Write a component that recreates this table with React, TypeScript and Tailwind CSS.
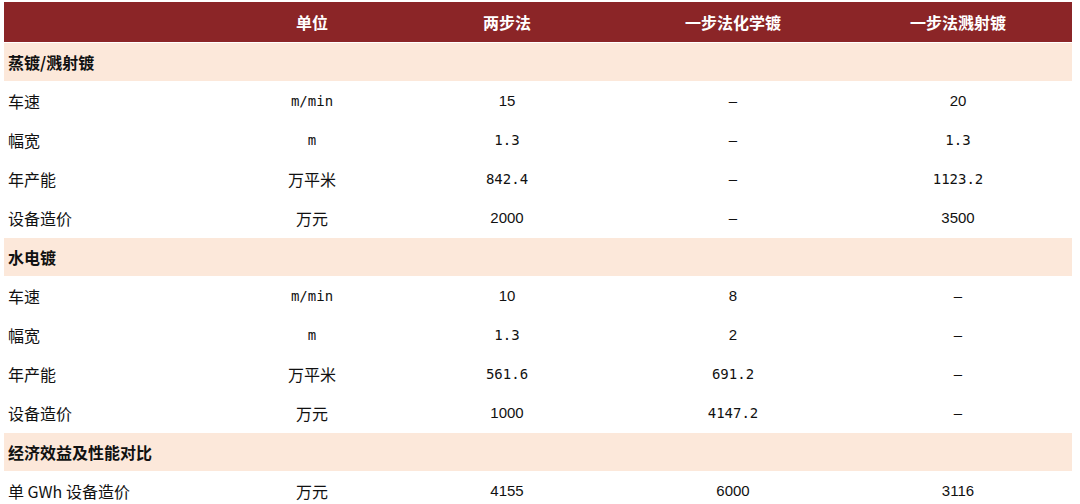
const cjk = "font-['SimHei','Noto_Sans_CJK_SC',sans-serif]";
const mono = "font-['DejaVu_Sans_Mono','Noto_Sans_CJK_SC',monospace] text-[14px] pt-[2px]";
const arial = "font-['Liberation_Sans','Noto_Sans_CJK_SC',sans-serif] text-[15px] pt-[2px]";

type Cell = { t: string; f?: "mono" | "arial" };

const dash: Cell = { t: "–", f: "arial" };

const rows: (string | Cell[])[] = [
  "蒸镀/溅射镀",
  [{ t: "车速" }, { t: "m/min", f: "mono" }, { t: "15", f: "arial" }, dash, { t: "20", f: "arial" }],
  [{ t: "幅宽" }, { t: "m", f: "mono" }, { t: "1.3", f: "mono" }, dash, { t: "1.3", f: "mono" }],
  [{ t: "年产能" }, { t: "万平米" }, { t: "842.4", f: "mono" }, dash, { t: "1123.2", f: "mono" }],
  [{ t: "设备造价" }, { t: "万元" }, { t: "2000", f: "arial" }, dash, { t: "3500", f: "arial" }],
  "水电镀",
  [{ t: "车速" }, { t: "m/min", f: "mono" }, { t: "10", f: "arial" }, { t: "8", f: "arial" }, dash],
  [{ t: "幅宽" }, { t: "m", f: "mono" }, { t: "1.3", f: "mono" }, { t: "2", f: "arial" }, dash],
  [{ t: "年产能" }, { t: "万平米" }, { t: "561.6", f: "mono" }, { t: "691.2", f: "mono" }, dash],
  [{ t: "设备造价" }, { t: "万元" }, { t: "1000", f: "arial" }, { t: "4147.2", f: "mono" }, dash],
  "经济效益及性能对比",
  [{ t: "单 GWh 设备造价" }, { t: "万元" }, { t: "4155", f: "arial" }, { t: "6000", f: "arial" }, { t: "3116", f: "arial" }],
];

const cols = "grid grid-cols-[210px_196px_194px_258px_192px]";

function fontOf(f?: string) {
  if (f === "mono") return mono;
  if (f === "arial") return arial;
  return `${cjk} text-[16px]`;
}

export default function App() {
  return (
    <div className="w-[1080px] h-[504px] overflow-hidden bg-white pt-[2px] pl-[4px] text-[#111111]">
      <div className="w-[1068px]">
        <div className={`${cols} h-[40px] items-center bg-[#8b2527] text-white font-bold ${cjk} text-[16px]`}>
          <div />
          <div className="text-center">单位</div>
          <div className="text-center">两步法</div>
          <div className="text-center">一步法化学镀</div>
          <div className="text-center">一步法溅射镀</div>
        </div>
        {rows.map((r, i) =>
          typeof r === "string" ? (
            <div key={i} className="h-[39px] pt-[1px]">
              <div className={`h-[38px] flex items-center bg-[#fce8da] pl-[4px] font-bold ${cjk} text-[16px]`}>{r}</div>
            </div>
          ) : (
            <div key={i} className={`${cols} h-[39px] items-center`}>
              {r.map((c, j) => (
                <div key={j} className={`${fontOf(c.f)} ${j === 0 ? "pl-[4px]" : "text-center"}`}>
                  {c.t}
                </div>
              ))}
            </div>
          )
        )}
      </div>
    </div>
  );
}
